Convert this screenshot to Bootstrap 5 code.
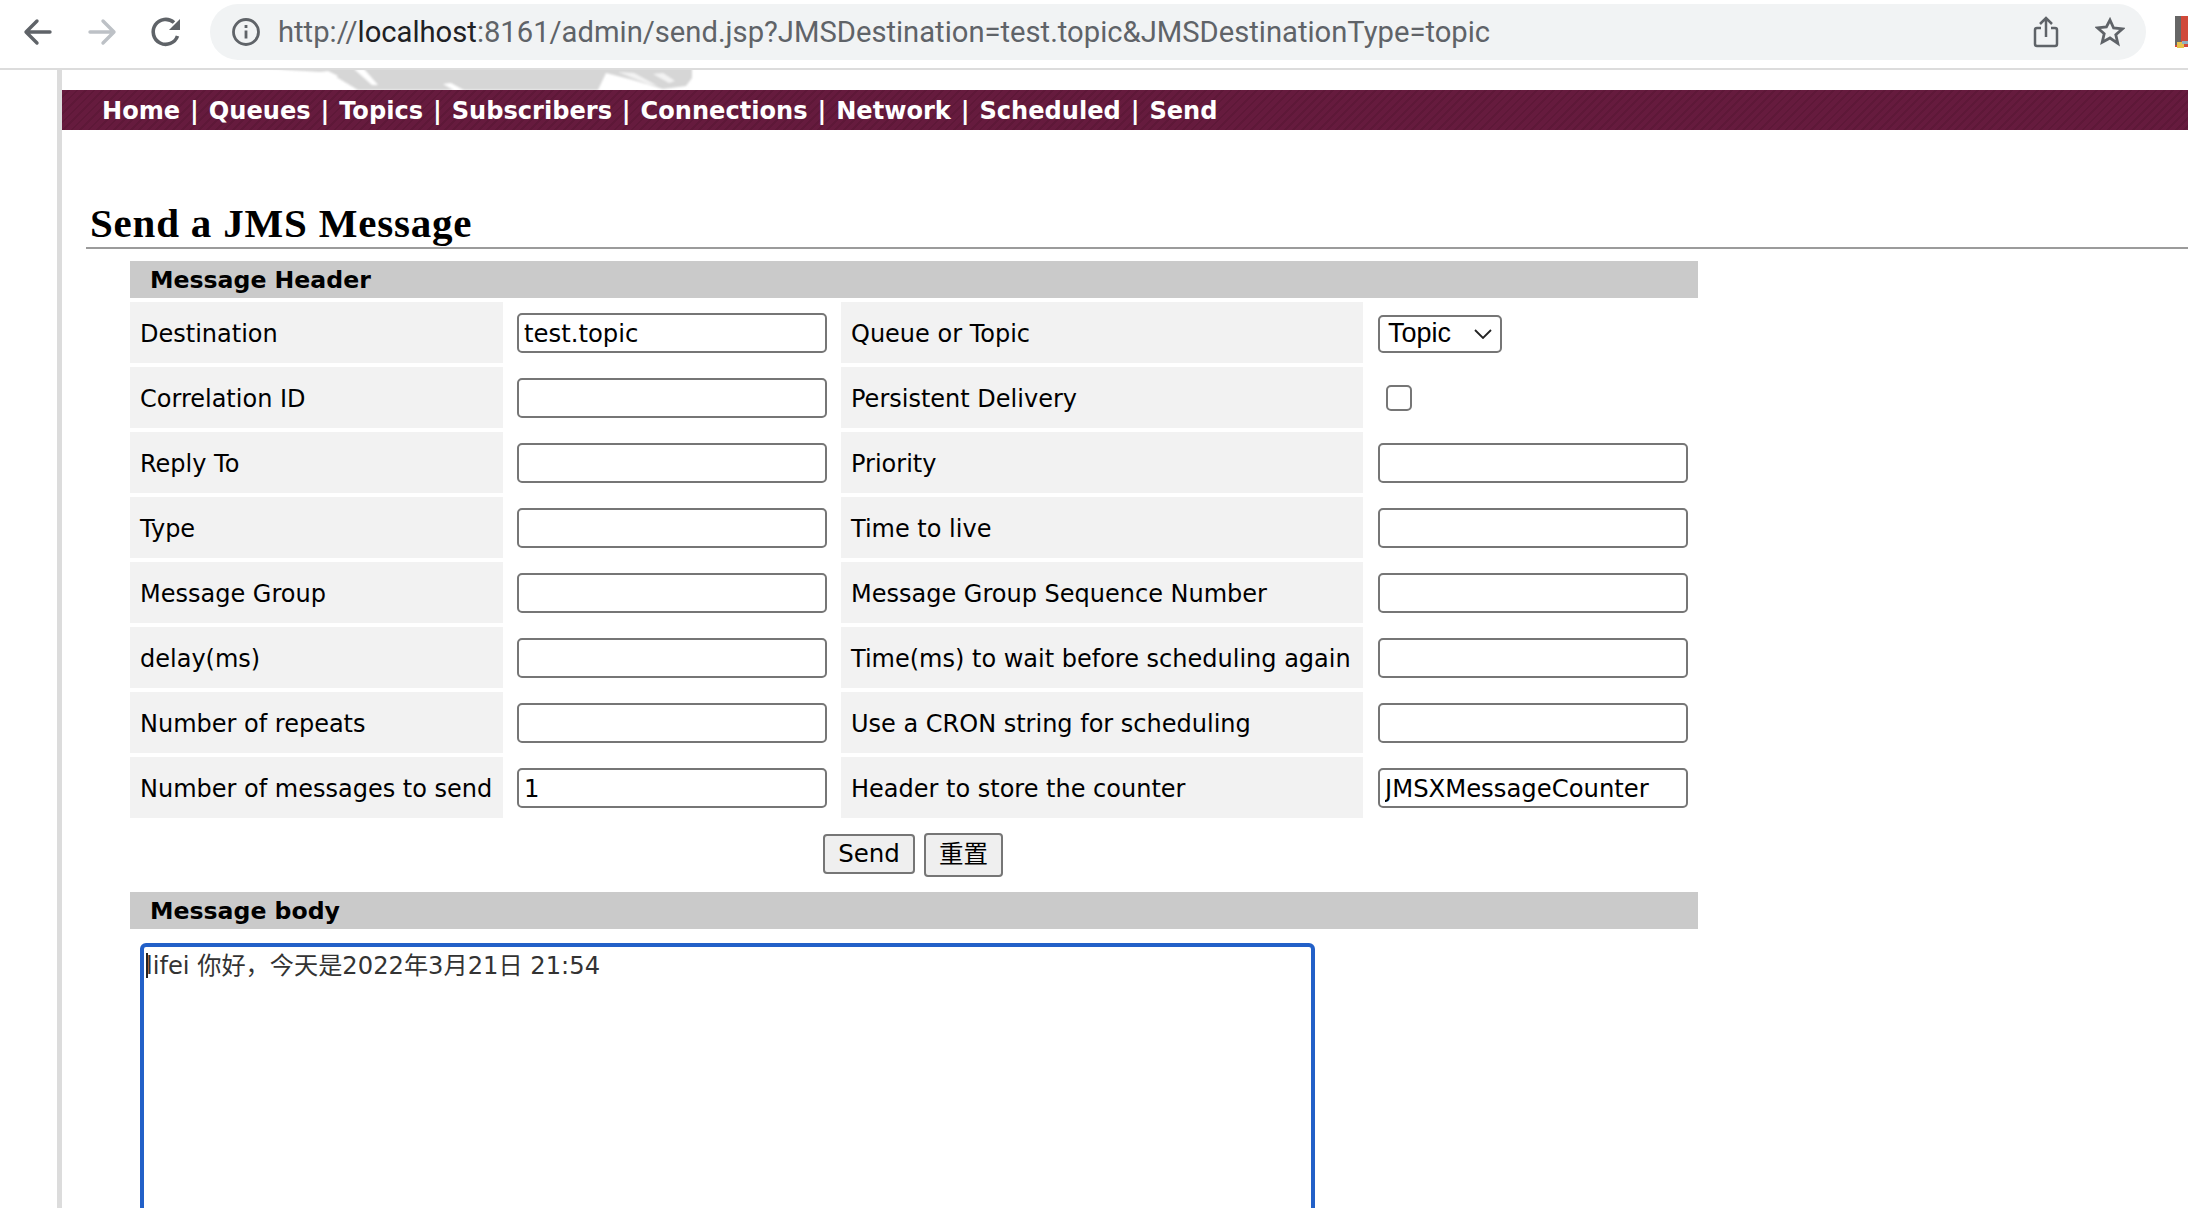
<!DOCTYPE html>
<html lang="en">
<head>
    <meta charset="UTF-8">
    <title>Send a JMS Message</title>
    <link href="https://cdn.jsdelivr.net/npm/bootstrap@5.3.0/dist/css/bootstrap.min.css" rel="stylesheet">
    <style>
        html, body { height: 100%; overflow: hidden; }
        body { font-family: "DejaVu Sans", sans-serif; color: #000; background: #fff; }
        .chrome-bar { height: 70px; border-bottom: 2px solid #dcdcdc; padding: 0 0 4px 18px; }
        .tool-btn { width: 40px; height: 40px; flex: none; }
        .tool-gap { margin-right: 24px; }
        .url-pill { width: 1936px; height: 56px; background: #f1f3f4; border-radius: 28px; padding: 0 21px 0 20px; flex: none; }
        .url-text { font-family: Roboto, sans-serif; font-size: 29.2px; color: #5f6368; margin-left: 18px; padding-top: 2px; white-space: nowrap; }
        .url-text b { font-weight: 400; color: #202124; }
        .fav-icon { margin-left: 29px; flex: none; }
        .page-wrap { height: 1138px; padding-left: 57px; }
        .page-sheet { height: 100%; border-left: 5px solid; border-image: linear-gradient(to right, #dcdcdc, #999) 1; overflow: hidden; }
        .logo-strip { height: 20px; padding-left: 206px; }
        .logo-strip svg { display: block; }
        .top-nav { height: 40px; padding: 2px 0 0 40px; color: #fff; font-weight: 700; font-size: 24.1px; word-spacing: 1.5px; white-space: nowrap;
            background: repeating-linear-gradient(135deg, #661b3e 0, #661b3e 4px, #5e1838 4px, #5e1838 6px); }
        .top-nav a { color: #fff; text-decoration: none; }
        .page-title { font-family: "Liberation Serif", serif; font-weight: 700; font-size: 41px; letter-spacing: .8px; line-height: 44px; margin: 0 0 0 28px; padding-top: 71px; }
        .title-rule { height: 2px; background: #9b9b9b; margin: 2px 0 12px 24px; }
        .form-area { width: 1568px; margin-left: 68px; }
        .sec-bar { height: 37px; line-height: 35px; padding: 2px 0 0 20px; background: #cacaca; font-weight: 700; font-size: 23.6px; }
        .field-grid { display: grid; grid-template-columns: 373px 330px 522px 331px; grid-auto-rows: 61px; gap: 4px; margin-top: 4px; }
        .field-label { background: #f2f2f2; font-size: 24px; padding: 2px 0 0 10px; white-space: nowrap; }
        .field-cell { padding-left: 10px; }
        .field-cell.cell-end { padding-left: 11px; }
        .plain-input { width: 310px; height: 40px; border: 2px solid #767676; border-radius: 5px; font-family: "DejaVu Sans", sans-serif; font-size: 24.3px; padding: 2px 5px 0; color: #000; background: #fff; }
        .plain-select { width: 124px; height: 38px; margin-top: 2px; border: 2px solid #767676; border-radius: 5px; font-family: "Liberation Sans", sans-serif; font-size: 27px; padding: 0 8px; background: #fff; }
        .select-arrow { margin-left: auto; }
        .plain-check { width: 26px; height: 26px; border: 2px solid #767676; border-radius: 5px; margin-left: 8px; }
        .btn-row { height: 74px; padding: 16px 0 0 693px; gap: 9px; }
        .plain-btn { height: 40px; width: 92px; border: 2px solid #767676; border-radius: 4px; background: #efefef; font-size: 24.5px; padding: 0; color: #000; }
        .plain-btn.reset-btn { width: 79px; height: 44px; font-family: "DejaVu Sans", "Noto Sans CJK SC", sans-serif; margin-top: -1px; }
        .msg-box { width: 1175px; height: 400px; margin: 14px 0 0 10px; border: 4px solid #2260c8; border-radius: 6px; padding: 1px 2px; font-size: 24.2px; line-height: 36px; color: #333; font-family: "DejaVu Sans", "Noto Sans CJK SC", sans-serif; }
        .caret-mark { display: inline-block; width: 2px; height: 25px; background: #222; vertical-align: -4px; margin-right: -2px; }
    </style>
</head>
<body>
<div class="chrome-bar d-flex align-items-center">
    <svg class="tool-btn tool-gap" viewBox="0 0 40 40" fill="none" stroke="#5f6368" stroke-width="3.4" stroke-linecap="round" stroke-linejoin="round"><path d="M32 20H9M19 9 8 20l11 11"/></svg>
    <svg class="tool-btn tool-gap" viewBox="0 0 40 40" fill="none" stroke="#bdc1c6" stroke-width="3.4" stroke-linecap="round" stroke-linejoin="round"><path d="M8 20h23M21 9l11 11-11 11"/></svg>
    <svg class="tool-btn tool-gap" viewBox="0 0 40 40" fill="none" stroke="#5f6368" stroke-width="3.6"><path d="M31.500 24A12.500 12.500 0 1 1 28 10.500"/><path d="M34 7v11H23z" fill="#5f6368" stroke="none"/></svg>
    <div class="url-pill d-flex align-items-center">
        <svg width="30" height="30" viewBox="0 0 30 30" fill="none" stroke="#5f6368" stroke-width="2.8"><circle cx="16" cy="15" r="12.500"/><path d="M16 13.500v8M16 8v3"/></svg>
        <span class="url-text">http://<b>localhost</b>:8161/admin/send.jsp?JMSDestination=test.topic&amp;JMSDestinationType=topic</span>
        <svg class="ms-auto" width="26" height="32" viewBox="0 0 26 32" fill="none" stroke="#5f6368" stroke-width="2.5"><path d="M8 12H4a2 2 0 0 0-2 2v14a2 2 0 0 0 2 2h18a2 2 0 0 0 2-2V14a2 2 0 0 0-2-2h-4M13 21V3M7 8l6-6 6 6"/></svg>
        <svg style="margin-left:36px" width="30" height="30" viewBox="0 0 30 30" fill="none" stroke="#5f6368" stroke-width="2.8"><path d="m15 3 3.600 8 8.900.9-6.700 5.800 2 8.600L15 21l-7.800 4.300 2-8.600-6.700-5.800 8.900-.9z"/></svg>
    </div>
    <svg class="fav-icon" width="13" height="32" viewBox="0 0 13 32"><rect width="13" height="31" fill="#d0493a"/><rect width="6" height="29" fill="#666"/><rect x="2" y="26" width="7" height="6" fill="#e8c24a"/><rect x="7" y="25" width="6" height="3" fill="#8fb0c0"/></svg>
</div>
<div class="page-wrap">
    <div class="page-sheet">
        <div class="logo-strip">
            <svg width="426" height="20" viewBox="0 0 426 20">
                <defs><filter id="soft"><feGaussianBlur stdDeviation="1.2"/></filter></defs>
                <g filter="url(#soft)">
                    <path d="M2 -2H424L424 8 418 16 395 19 365 10 338 3 330 20H90L70 8 55 2 20 0z" fill="#d6d6d6"/>
                    <path d="M52 2l14 8 4-4-10-5zM86 -1l18 16 6 0-14-16zM175 14l14 8 10 0-16-9z" fill="#fff"/>
                    <path d="M350 2l30 12 10 2-24-13zM385 4l16 9 6-2-12-8z" fill="#fff" opacity=".7"/>
                </g>
            </svg>
        </div>
        <div class="top-nav d-flex align-items-center">
            <span><a href="#">Home</a> | <a href="#">Queues</a> | <a href="#">Topics</a> | <a href="#">Subscribers</a> | <a href="#">Connections</a> | <a href="#">Network</a> | <a href="#">Scheduled</a> | <a href="#">Send</a></span>
        </div>
        <h1 class="page-title">Send a JMS Message</h1>
        <div class="title-rule"></div>
        <div class="form-area">
            <div class="sec-bar">Message Header</div>
            <div class="field-grid" id="fields"></div>
            <div class="btn-row d-flex align-items-start">
                <button class="plain-btn" type="button">Send</button>
                <button class="plain-btn reset-btn" type="button">重置</button>
            </div>
            <div class="sec-bar">Message body</div>
            <div class="msg-box"><span class="caret-mark"></span>lifei 你好，今天是2022年3月21日 21:54</div>
        </div>
    </div>
</div>
<script>
    const rows = [
        ["Destination", "test.topic", "Queue or Topic", "select"],
        ["Correlation ID", "", "Persistent Delivery", "check"],
        ["Reply To", "", "Priority", ""],
        ["Type", "", "Time to live", ""],
        ["Message Group", "", "Message Group Sequence Number", ""],
        ["delay(ms)", "", "Time(ms) to wait before scheduling again", ""],
        ["Number of repeats", "", "Use a CRON string for scheduling", ""],
        ["Number of messages to send", "1", "Header to store the counter", "JMSXMessageCounter"]
    ];

    function cell(value) {
        if (value === "select") {
            return `<div class="plain-select d-flex align-items-center">Topic<svg class="select-arrow" width="18" height="10" viewBox="0 0 18 10" fill="none" stroke="#222" stroke-width="1.8"><path d="m1 1 8 8 8-8"/></svg></div>`;
        }
        if (value === "check") {
            return `<div class="plain-check"></div>`;
        }
        return `<input class="plain-input" type="text" value="${value}">`;
    }

    let html = "";
    for (const r of rows) {
        html += `<div class="field-label d-flex align-items-center">${r[0]}</div>`;
        html += `<div class="field-cell d-flex align-items-center">${cell(r[1])}</div>`;
        html += `<div class="field-label d-flex align-items-center">${r[2]}</div>`;
        html += `<div class="field-cell cell-end d-flex align-items-center">${cell(r[3])}</div>`;
    }
    document.getElementById("fields").innerHTML = html;
</script>
<script src="https://cdn.jsdelivr.net/npm/bootstrap@5.3.0/dist/js/bootstrap.bundle.min.js"></script>
</body>
</html>
